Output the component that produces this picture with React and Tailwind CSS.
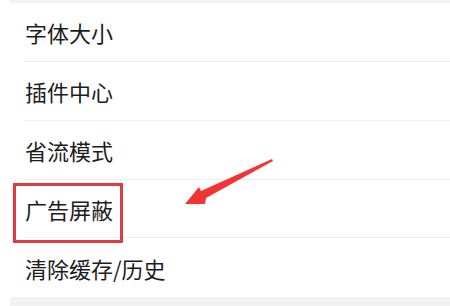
export default function App() {
  const rows = [
    { label: "字体大小", h: "h-[59px]" },
    { label: "插件中心", h: "h-[59px]" },
    { label: "省流模式", h: "h-[59px]" },
    { label: "广告屏蔽", h: "h-[58px]" },
    { label: "清除缓存/历史", h: "h-[59px]" },
  ];
  return (
    <div
      className="relative w-[450px] h-[306px] bg-white overflow-hidden"
      style={{ fontFamily: '"Noto Sans CJK SC", "Noto Sans", sans-serif' }}
    >
      <div className="h-[3px] ml-[10px] bg-[#f2f2f2]" />
      {rows.map((r, i) => (
        <div key={i} className="pl-[24px]">
          <div
            className={`${r.h} flex items-center pl-[1px] text-[22px] leading-none text-[#1c1c1c] ${
              i < rows.length - 1 ? "border-b border-[#efefef]" : ""
            }`}
          >
            {r.label}
          </div>
        </div>
      ))}
      <div className="h-[9px] ml-[10px] bg-[#f2f2f2]" />
      <div className="absolute left-[13px] top-[183px] w-[110px] h-[60px] border-[3px] border-[#e03a3e]" />
      <svg className="absolute left-0 top-0" width="450" height="306" viewBox="0 0 450 306">
        <polygon
          points="185,204 199,187 201,191 272,159 273,161 206,198 205,204"
          fill="#f23434"
        />
      </svg>
    </div>
  );
}
